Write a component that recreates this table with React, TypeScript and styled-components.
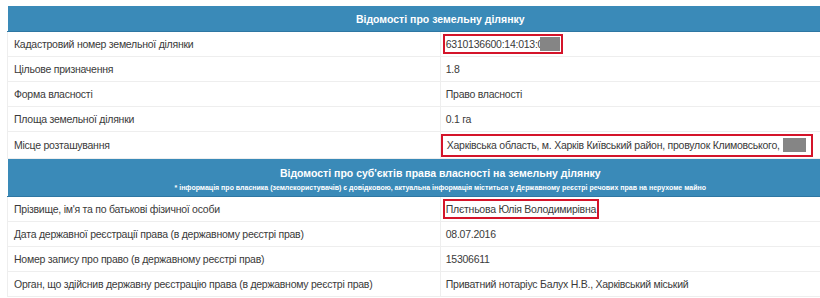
import styled, { createGlobalStyle } from "styled-components";

const GlobalStyle = createGlobalStyle`
	html, body {
		margin: 0;
		padding: 0;
		background: #fff;
		overflow: hidden;
	}
	body {
		font-family: "Liberation Sans", Arial, sans-serif;
		color: #3a3a3a;
	}
`;

type Row = {
	label: string;
	value: string;
	mark?: "box" | "wide";
	hidden?: boolean;
};

const landRows: Row[] = [
	{label: "Кадастровий номер земельної ділянки", value: "6310136600:14:013:0", mark: "box", hidden: true},
	{label: "Цільове призначення", value: "1.8"},
	{label: "Форма власності", value: "Право власності"},
	{label: "Площа земельної ділянки", value: "0.1 га"},
	{label: "Місце розташування", value: "Харківська область, м. Харків Київський район, провулок Климовського,", mark: "wide", hidden: true},
];

const ownerRows: Row[] = [
	{label: "Прізвище, ім'я та по батькові фізичної особи", value: "Плєтньова Юлія Володимирівна", mark: "box"},
	{label: "Дата державної реєстрації права (в державному реєстрі прав)", value: "08.07.2016"},
	{label: "Номер запису про право (в державному реєстрі прав)", value: "15306611"},
	{label: "Орган, що здійснив державну реєстрацію права (в державному реєстрі прав)", value: "Приватний нотаріус Балух Н.В., Харківський міський"},
];

function renderRows(rows: Row[]) {
	return rows.map((r) => (
		<tr key={r.label}>
			<LabelCell tall={r.mark === "wide"}>{r.label}</LabelCell>
			<ValueCell tall={r.mark === "wide"}>
				{r.mark ? (
					<Marked wide={r.mark === "wide"}>
						{r.value}
						{r.hidden && <Redacted wide={r.mark === "wide"}/>}
					</Marked>
				) : r.value}
			</ValueCell>
		</tr>
	));
}

export default function App() {
	return (
		<Page>
			<GlobalStyle/>
			<InfoTable>
				<tbody>
					<tr>
						<HeadCell colSpan={2}>
							<HeadTitle>Відомості про земельну ділянку</HeadTitle>
						</HeadCell>
					</tr>
					{renderRows(landRows)}
					<tr>
						<HeadCell colSpan={2} tall>
							<HeadTitle>Відомості про суб'єктів права власності на земельну ділянку</HeadTitle>
							<HeadNote>* інформація про власника (землекористувачів) є довідковою, актуальна інформація міститься у Державному реєстрі речових прав на нерухоме майно</HeadNote>
						</HeadCell>
					</tr>
					{renderRows(ownerRows)}
				</tbody>
			</InfoTable>
		</Page>
	);
}

const Page = styled.div`
	padding: 6px 0 0 7px;
	width: 900px;
`;

const InfoTable = styled.table`
	width: 866px;
	border-collapse: collapse;
	table-layout: fixed;
	font-size: 10.5px;
	letter-spacing: -0.25px;
`;

const HeadCell = styled.td<{tall?: boolean}>`
	background: #3a8ab8;
	border-bottom: 1px solid #2e77a3;
	color: #fff;
	text-align: center;
	height: ${p => p.tall ? "32px" : "25px"};
	padding: ${p => p.tall ? "4px 0 1px" : "0"};
	vertical-align: middle;
	letter-spacing: 0;
`;

const HeadTitle = styled.div`
	font-weight: bold;
	font-size: 10.5px;
	line-height: 14px;
`;

const HeadNote = styled.div`
	font-weight: bold;
	font-size: 7px;
	line-height: 10px;
	margin-top: 3px;
`;

const LabelCell = styled.td<{tall?: boolean}>`
	width: 50%;
	height: ${p => p.tall ? "26px" : "24px"};
	padding: 0 6px;
	border-left: 1px solid #eee;
	border-bottom: 1px solid #eee;
	vertical-align: middle;
	white-space: nowrap;
`;

const ValueCell = styled(LabelCell)`
	padding: 0 5px;
`;

const Marked = styled.span<{wide?: boolean}>`
	display: inline-flex;
	align-items: center;
	margin-left: ${p => p.wide ? "-5px" : "-3px"};
	padding: ${p => p.wide ? "0 5px 0 4px" : "0 1px"};
	height: ${p => p.wide ? "19px" : "16px"};
	border: 2px solid #d4142a;
`;

const Redacted = styled.span<{wide?: boolean}>`
	display: inline-block;
	width: ${p => p.wide ? "23px" : "20px"};
	height: 14px;
	margin-left: ${p => p.wide ? "3px" : "-3px"};
	background: #858585;
`;
